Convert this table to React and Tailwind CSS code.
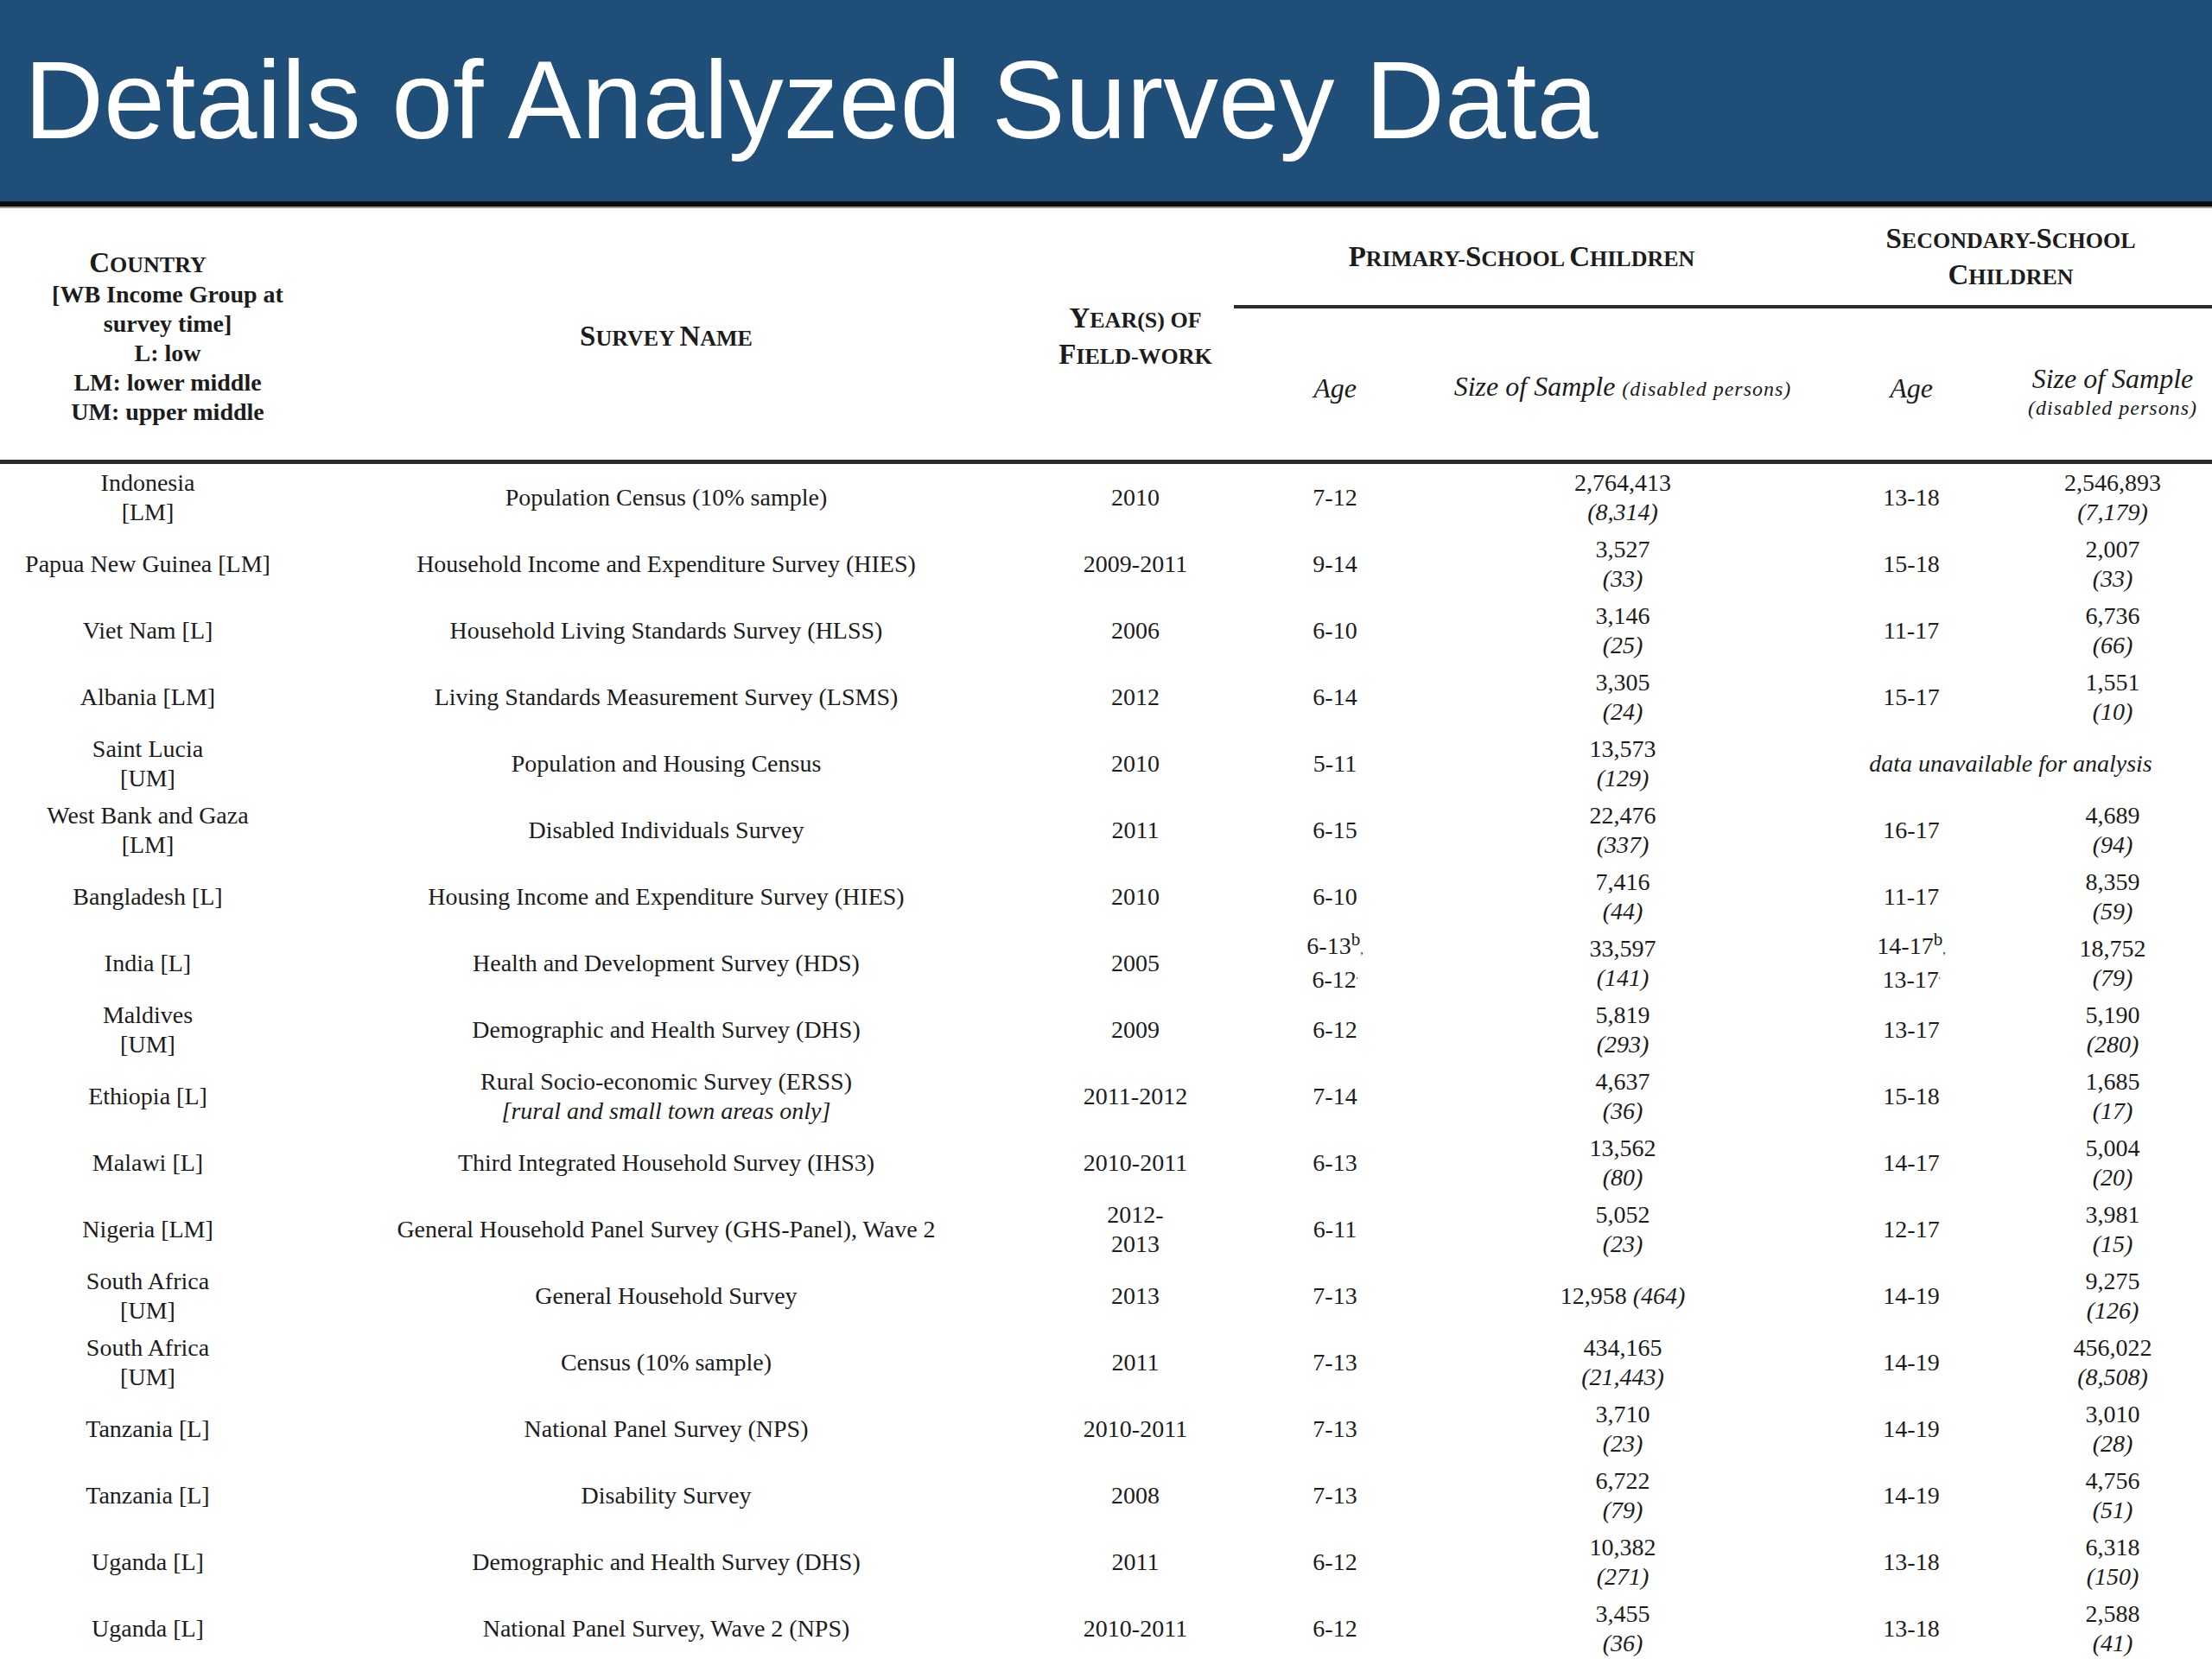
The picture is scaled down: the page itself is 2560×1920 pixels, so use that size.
const cols = "grid grid-cols-[342px_858px_228px_234px_432px_236px_230px]";

const rows = [
  { c: ["Indonesia", "[LM]"], s: ["Population Census (10% sample)"], y: ["2010"], pa: ["7-12"], ps: ["2,764,413", "(8,314)"], sa: ["13-18"], ss: ["2,546,893", "(7,179)"] },
  { c: ["Papua New Guinea [LM]"], s: ["Household Income and Expenditure Survey (HIES)"], y: ["2009-2011"], pa: ["9-14"], ps: ["3,527", "(33)"], sa: ["15-18"], ss: ["2,007", "(33)"] },
  { c: ["Viet Nam [L]"], s: ["Household Living Standards Survey (HLSS)"], y: ["2006"], pa: ["6-10"], ps: ["3,146", "(25)"], sa: ["11-17"], ss: ["6,736", "(66)"] },
  { c: ["Albania [LM]"], s: ["Living Standards Measurement Survey (LSMS)"], y: ["2012"], pa: ["6-14"], ps: ["3,305", "(24)"], sa: ["15-17"], ss: ["1,551", "(10)"] },
  { c: ["Saint Lucia", "[UM]"], s: ["Population and Housing Census"], y: ["2010"], pa: ["5-11"], ps: ["13,573", "(129)"], na: true },
  { c: ["West Bank and Gaza", "[LM]"], s: ["Disabled Individuals Survey"], y: ["2011"], pa: ["6-15"], ps: ["22,476", "(337)"], sa: ["16-17"], ss: ["4,689", "(94)"] },
  { c: ["Bangladesh [L]"], s: ["Housing Income and Expenditure Survey (HIES)"], y: ["2010"], pa: ["6-10"], ps: ["7,416", "(44)"], sa: ["11-17"], ss: ["8,359", "(59)"] },
  { c: ["India [L]"], s: ["Health and Development Survey (HDS)"], y: ["2005"], india: true, ps: ["33,597", "(141)"], ss: ["18,752", "(79)"] },
  { c: ["Maldives", "[UM]"], s: ["Demographic and Health Survey (DHS)"], y: ["2009"], pa: ["6-12"], ps: ["5,819", "(293)"], sa: ["13-17"], ss: ["5,190", "(280)"] },
  { c: ["Ethiopia [L]"], s: ["Rural Socio-economic Survey (ERSS)"], note: "[rural and small town areas only]", y: ["2011-2012"], pa: ["7-14"], ps: ["4,637", "(36)"], sa: ["15-18"], ss: ["1,685", "(17)"] },
  { c: ["Malawi [L]"], s: ["Third Integrated Household Survey (IHS3)"], y: ["2010-2011"], pa: ["6-13"], ps: ["13,562", "(80)"], sa: ["14-17"], ss: ["5,004", "(20)"] },
  { c: ["Nigeria [LM]"], s: ["General Household Panel Survey (GHS-Panel), Wave 2"], y: ["2012-", "2013"], pa: ["6-11"], ps: ["5,052", "(23)"], sa: ["12-17"], ss: ["3,981", "(15)"] },
  { c: ["South Africa", "[UM]"], s: ["General Household Survey"], y: ["2013"], pa: ["7-13"], ps: ["12,958", "(464)"], inline: true, sa: ["14-19"], ss: ["9,275", "(126)"] },
  { c: ["South Africa", "[UM]"], s: ["Census (10% sample)"], y: ["2011"], pa: ["7-13"], ps: ["434,165", "(21,443)"], sa: ["14-19"], ss: ["456,022", "(8,508)"] },
  { c: ["Tanzania [L]"], s: ["National Panel Survey (NPS)"], y: ["2010-2011"], pa: ["7-13"], ps: ["3,710", "(23)"], sa: ["14-19"], ss: ["3,010", "(28)"] },
  { c: ["Tanzania [L]"], s: ["Disability Survey"], y: ["2008"], pa: ["7-13"], ps: ["6,722", "(79)"], sa: ["14-19"], ss: ["4,756", "(51)"] },
  { c: ["Uganda [L]"], s: ["Demographic and Health Survey (DHS)"], y: ["2011"], pa: ["6-12"], ps: ["10,382", "(271)"], sa: ["13-18"], ss: ["6,318", "(150)"] },
  { c: ["Uganda [L]"], s: ["National Panel Survey, Wave 2 (NPS)"], y: ["2010-2011"], pa: ["6-12"], ps: ["3,455", "(36)"], sa: ["13-18"], ss: ["2,588", "(41)"] },
];

// fake small caps: capitals stay big, the rest is set in smaller capitals
const SmallCaps = ({ text }) =>
  text.match(/[A-Z]+|[^A-Z]+/g).map((p, i) =>
    /[A-Z]/.test(p) ? (
      <span key={i} className="text-[33px]">{p}</span>
    ) : (
      <span key={i} className="text-[26px]">{p.toUpperCase()}</span>
    )
  );

const Lines = ({ items }) => (
  <div>
    {items.map((t, i) => (
      <div key={i}>{t}</div>
    ))}
  </div>
);

const Sample = ({ v, inline }) =>
  inline ? (
    <div>
      {v[0]} <span className="italic">{v[1]}</span>
    </div>
  ) : (
    <div>
      <div>{v[0]}</div>
      <div className="italic">{v[1]}</div>
    </div>
  );

const Cell = ({ children, span }) => (
  <div className={`flex items-center justify-center text-center ${span ? "col-span-2" : ""}`}>
    {children}
  </div>
);

const Row = ({ r }) => (
  <div className={`${cols} h-[77px]`}>
    <Cell><Lines items={r.c} /></Cell>
    <Cell>
      <div>
        <div>{r.s[0]}</div>
        {r.note && <div className="italic">{r.note}</div>}
      </div>
    </Cell>
    <Cell><Lines items={r.y} /></Cell>
    <Cell>
      {r.india ? (
        <div>
          <div>6-13<sup>b</sup><span className="text-[14px]">,</span></div>
          <div>6-12<sup className="text-[10px]">'</sup></div>
        </div>
      ) : (
        <Lines items={r.pa} />
      )}
    </Cell>
    <Cell><Sample v={r.ps} inline={r.inline} /></Cell>
    {r.na ? (
      <Cell span>
        <div className="italic">data unavailable for analysis</div>
      </Cell>
    ) : (
      <>
        <Cell>
          {r.india ? (
            <div>
              <div>14-17<sup>b</sup><span className="text-[14px]">,</span></div>
              <div>13-17<sup className="text-[10px]">'</sup></div>
            </div>
          ) : (
            <Lines items={r.sa} />
          )}
        </Cell>
        <Cell><Sample v={r.ss} /></Cell>
      </>
    )}
  </div>
);

export default function App() {
  return (
    <div className="w-[2560px] h-[1920px] overflow-hidden bg-white">
      {/* Title bar */}
      <div className="h-[233px] bg-[#1f4e79] flex items-center pl-[28px]">
        <h1 className="text-white text-[127.5px] leading-none font-['Liberation_Sans',Arial,sans-serif]">
          Details of Analyzed Survey Data
        </h1>
      </div>
      <div className="h-[6px] bg-[#0b0b0b]" />
      <div className="h-[2px] bg-[#9a9a9a]" />

      <div className="font-['Liberation_Serif','Times_New_Roman',serif] text-[#1c1c1c]">
        {/* Header */}
        <div className={`${cols} grid-rows-[116px_175px] font-bold`}>
          <div className="row-span-2 flex items-center justify-center text-center text-[28px] leading-[34px] pt-2 pl-[46px]">
            <div>
              <div className="pr-[46px]"><SmallCaps text="Country" /></div>
              <div>[WB Income Group at</div>
              <div>survey time]</div>
              <div>L: low</div>
              <div>LM: lower middle</div>
              <div>UM: upper middle</div>
            </div>
          </div>
          <div className="row-span-2 flex items-center justify-center leading-[37px] pt-[10px]">
            <div><SmallCaps text="Survey Name" /></div>
          </div>
          <div className="row-span-2 flex items-center justify-center text-center leading-[37px] pt-[10px]">
            <div>
              <div><SmallCaps text="Year(s) of" /></div>
              <div><SmallCaps text="Field-work" /></div>
            </div>
          </div>
          <div className="col-span-2 flex items-center justify-center border-b-[4px] border-[#2b2b2b] leading-[37px] pt-[6px]">
            <div><SmallCaps text="Primary-School Children" /></div>
          </div>
          <div className="col-span-2 flex items-center justify-center text-center border-b-[4px] border-[#2b2b2b] leading-[37px] pt-[6px]">
            <div>
              <div><SmallCaps text="Secondary-School" /></div>
              <div><SmallCaps text="Children" /></div>
            </div>
          </div>
          <div className="flex items-center justify-center font-normal italic text-[32px] leading-[36px] pt-2">Age</div>
          <div className="flex items-center justify-center font-normal italic text-[32px] leading-[36px] pt-2">
            <div>
              Size of Sample{" "}
              <span className="text-[24px] tracking-[1px]">(disabled persons)</span>
            </div>
          </div>
          <div className="flex items-center justify-center font-normal italic text-[32px] leading-[36px] pt-2">Age</div>
          <div className="flex items-center justify-center text-center font-normal italic pt-5">
            <div>
              <div className="text-[32px] leading-[36px]">Size of Sample</div>
              <div className="text-[24px] leading-[33px] tracking-[1px]">(disabled persons)</div>
            </div>
          </div>
        </div>
        <div className="h-[5px] bg-[#2b2b2b]" />

        {/* Body */}
        <div className="text-[28px] leading-[34px]">
          {rows.map((r, i) => (
            <Row key={i} r={r} />
          ))}
        </div>
      </div>
    </div>
  );
}
